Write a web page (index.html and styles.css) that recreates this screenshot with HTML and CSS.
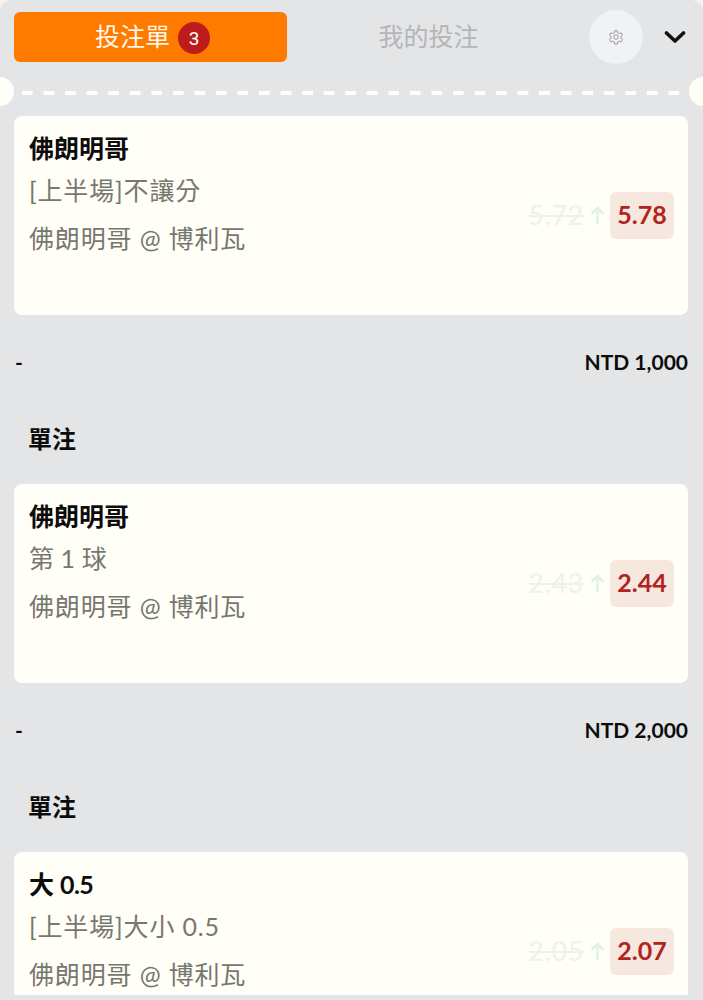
FILE: index.html
```html
<!DOCTYPE html>
<html lang="zh-Hant">
<head>
<meta charset="utf-8">
<title>投注單</title>
<link rel="stylesheet" href="styles.css">
</head>
<body>
<main class="panel">
  <header class="tabs">
    <div class="tab-active"><span class="tab-label">投注單</span><span class="badge">3</span></div>
    <div class="tab-other"><span class="tab-label">我的投注</span></div>
    <button class="gear" aria-label="設定">
      <svg width="16" height="16" viewBox="0 0 24 24" fill="none" stroke="#8a8a8a" stroke-width="1.3" stroke-linejoin="round"><path d="M10 2.5h4l.6 3 2.3 1.3 2.9-1 2 3.4-2.3 2v2.6l2.3 2-2 3.4-2.9-1-2.3 1.3-.6 3h-4l-.6-3-2.3-1.3-2.9 1-2-3.4 2.3-2v-2.6l-2.3-2 2-3.4 2.9 1 2.3-1.3z"/><circle cx="12" cy="12" r="3.4"/></svg>
    </button>
    <svg class="chev" width="22" height="14" viewBox="0 0 22 14" fill="none" stroke="#111" stroke-width="3.6" stroke-linecap="round" stroke-linejoin="round"><path d="M2.5 3l8.5 8 8.5-8"/></svg>
  </header>
  <div class="perforation"><i class="notch notch-l"></i><div class="dash"></div><i class="notch notch-r"></i></div>

  <section class="card">
    <div class="info">
      <div class="title">佛朗明哥</div>
      <div class="market">[上半場]不讓分</div>
      <div class="match">佛朗明哥 @ 博利瓦</div>
    </div>
    <div class="odds"><s class="old">5.72</s><svg class="arrow" width="15" height="18" viewBox="0 0 15 18" fill="none" stroke="#e3f1e3" stroke-width="2.6"><path d="M7.5 18V2M1.5 8l6-6 6 6"/></svg><b class="new">5.78</b></div>
  </section>
  <div class="stake"><b class="dash-value">-</b><b>NTD 1,000</b></div>
  <div class="type">單注</div>

  <section class="card">
    <div class="info">
      <div class="title">佛朗明哥</div>
      <div class="market market-short">第 1 球</div>
      <div class="match">佛朗明哥 @ 博利瓦</div>
    </div>
    <div class="odds"><s class="old">2.43</s><svg class="arrow" width="15" height="18" viewBox="0 0 15 18" fill="none" stroke="#e3f1e3" stroke-width="2.6"><path d="M7.5 18V2M1.5 8l6-6 6 6"/></svg><b class="new">2.44</b></div>
  </section>
  <div class="stake"><b class="dash-value">-</b><b>NTD 2,000</b></div>
  <div class="type">單注</div>

  <section class="card">
    <div class="info">
      <div class="title">大 <span class="tight">0.5</span></div>
      <div class="market">[上半場]大小 0.5</div>
      <div class="match">佛朗明哥 @ 博利瓦</div>
    </div>
    <div class="odds"><s class="old">2.05</s><svg class="arrow" width="15" height="18" viewBox="0 0 15 18" fill="none" stroke="#e3f1e3" stroke-width="2.6"><path d="M7.5 18V2M1.5 8l6-6 6 6"/></svg><b class="new">2.07</b></div>
  </section>
</main>
</body>
</html>
```
FILE: styles.css
```css
* { box-sizing: border-box; }
html { margin: 0; height: 1000px; overflow: hidden; background: #f3f3f3; }
body { margin: 0; height: 1000px; overflow: hidden; background: #e4e5e7; border-radius: 12px 12px 0 0; font-family: Lato, "Noto Sans CJK TC", sans-serif; }
.panel { height: 995px; overflow: hidden; padding: 0 15px 0 14px; }
.tabs { height: 75px; display: flex; align-items: center; }
.tab-active { width: 273px; height: 50px; margin-top: -1px; padding-left: 4px; background: #ff7b00; border-radius: 6px; color: #fff6e6; display: flex; align-items: center; justify-content: center; gap: 8px; }
.tab-label { font-size: 25px; line-height: 36px; position: relative; top: -1px; }
.badge { width: 32px; height: 32px; border-radius: 50%; background: #bd1c1c; color: #fff; font-size: 19px; font-family: Roboto, sans-serif; display: flex; align-items: center; justify-content: center; position: relative; top: 1px; }
.tab-other { width: 283px; height: 50px; margin-top: -1px; display: flex; align-items: center; justify-content: center; color: #b4b5b7; }
.gear { width: 54px; height: 54px; margin-left: 19px; margin-top: -1px; border: 0; border-radius: 50%; background: #f1f2f5; padding: 0; display: flex; align-items: center; justify-content: center; }
.chev { margin-left: 21px; margin-top: -1px; }
.perforation { height: 41px; margin: 0 -15px 0 -14px; padding-top: 16px; position: relative; }
.dash { height: 4px; margin: 0 21px 0 21.7px; background: linear-gradient(90deg, #fffef7 0, #fffef7 10.5px, transparent 10.5px) 0 0 / 21.55px 100% repeat-x; }
.notch { position: absolute; top: 2px; width: 28px; height: 29px; border-radius: 50%; background: #fffef7; }
.notch-l { left: -14px; }
.notch-r { right: -14px; }
.card { height: 199px; background: #fffef7; border-radius: 8px; padding: 14px 14px 0 15px; display: flex; justify-content: space-between; }
.title { font-size: 25px; line-height: 36px; font-weight: 700; color: #0c0c0c; }
.tight { letter-spacing: -.6px; }
.market { font-size: 25px; line-height: 36px; letter-spacing: .85px; margin-top: 6px; color: #77776f; }
.market-short { word-spacing: -1.5px; }
.match { font-size: 25px; line-height: 36px; letter-spacing: .85px; margin-top: 12px; color: #77776f; }
.odds { display: flex; align-items: center; height: 47px; margin-top: 62px; }
.old { font-size: 26px; letter-spacing: 1px; color: #f0f0ec; padding-bottom: 2px; }
.arrow { margin: 0 5px 2px 6px; }
.new { width: 64px; height: 47px; padding-bottom: 3px; border-radius: 6px; background: #f6e8df; color: #b2231f; font-size: 25px; display: flex; align-items: center; justify-content: center; }
.stake { display: flex; justify-content: space-between; height: 36px; margin-top: 29px; font-size: 21px; line-height: 36px; color: #0c0c0c; }
.dash-value { padding-left: 1px; }
.type { height: 36px; margin-top: 41px; margin-bottom: 27px; padding-left: 14px; font-size: 24px; line-height: 36px; font-weight: 700; color: #0c0c0c; }
```
